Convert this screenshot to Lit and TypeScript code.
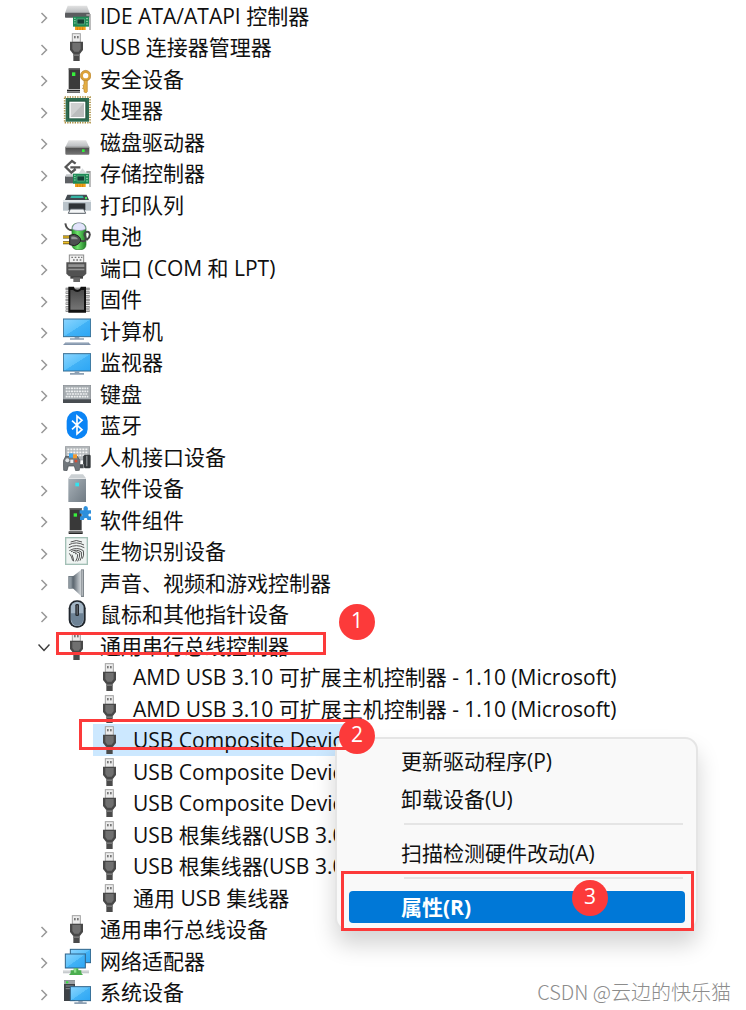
import { LitElement, html, svg, css, nothing } from "lit";
import { customElement, property, state } from "lit/decorators.js";
import { classMap } from "lit/directives/class-map.js";

const usb = svg`
  <rect x="28" y="2" width="24" height="26" fill="#ececec" stroke="#a2a2a2" stroke-width="3"/>
  <rect x="33" y="9" width="5" height="7" fill="#777"/><rect x="42" y="9" width="5" height="7" fill="#777"/>
  <path d="M31 56h19v28H31z" fill="#4a4a4a"/>
  <path d="M21 26h39v25l-9 11H30l-9-11z" fill="#484848"/>
  <path d="M28 30h25v18l-6 8H34l-6-8z" fill="#707070"/>
  <path d="M31 64h19v5H31z" fill="#777"/>`;

const card = svg`
  <path d="M70 36h13v48h-4V42h-9z" fill="#9b9b9b"/>
  <rect x="36" y="72" width="32" height="12" fill="#f2a21b"/>
  <path d="M43 76v8M51 76v8M59 76v8" stroke="#c06c0a" stroke-width="2"/>
  <rect x="30" y="44" width="48" height="30" fill="#1e8a57"/>
  <rect x="42" y="51" width="22" height="15" fill="#123f35" stroke="#69b98e" stroke-width="2"/>
  <path d="M33 49h5M33 56h5M33 63h5M69 50h6M69 58h6M69 66h6" stroke="#8bd1a6" stroke-width="3"/>`;

const gradients = svg`
  <defs>
    <linearGradient id="screen" x1="0" y1="0" x2="1" y2="1">
      <stop offset="0" stop-color="#8ad4ff"/><stop offset=".5" stop-color="#5cc2fb"/>
      <stop offset=".51" stop-color="#42b2f6"/><stop offset="1" stop-color="#2ca6f5"/>
    </linearGradient>
    <linearGradient id="silver" x1="0" y1="0" x2="0" y2="1">
      <stop offset="0" stop-color="#e3e3e3"/><stop offset="1" stop-color="#b5b8bb"/>
    </linearGradient>
    <linearGradient id="steel" x1="0" y1="0" x2="1" y2="1">
      <stop offset="0" stop-color="#a9b2b9"/><stop offset="1" stop-color="#6f7a83"/>
    </linearGradient>
    <linearGradient id="dark" x1="0" y1="0" x2="0" y2="1">
      <stop offset="0" stop-color="#4a4a4a"/><stop offset="1" stop-color="#757575"/>
    </linearGradient>
    <linearGradient id="horn" x1="0" y1="0" x2="1" y2="0">
      <stop offset="0" stop-color="#5c666f"/><stop offset=".6" stop-color="#a9b0b6"/><stop offset="1" stop-color="#d4d8db"/>
    </linearGradient>
    <linearGradient id="cell" x1="0" y1="0" x2="1" y2="0">
      <stop offset="0" stop-color="#2c9e2e"/><stop offset=".4" stop-color="#6fe36c"/><stop offset="1" stop-color="#1f7d25"/>
    </linearGradient>
  </defs>`;

const icons = {
  ide: svg`
    <path d="M14 11h58l8 22H6z" fill="url(#silver)"/>
    <rect x="6" y="32" width="74" height="15" rx="2" fill="#5a5c5f"/>${card}`,
  usb,
  security: svg`
    <rect x="17" y="10" width="34" height="62" fill="#3b3b3b"/>
    <path d="M17 10h34v4H17z" fill="#666"/>
    <rect x="27" y="22" width="10" height="11" fill="#37f03c"/>
    <path d="M12 74h39v9H12z" fill="#242424"/><path d="M12 78h39v3H12z" fill="#8b8b8b"/>
    <circle cx="68" cy="32" r="12" fill="none" stroke="#dca23a" stroke-width="8"/>
    <circle cx="68" cy="32" r="16" fill="none" stroke="#a77320" stroke-width="1.5"/>
    <path d="M63 46h10v34l-5 5-5-5v-7l-5-3 5-4-4-4 4-4z" fill="#e4ae45" stroke="#a77320" stroke-width="1.5"/>`,
  cpu: svg`
    <rect x="5" y="3" width="76" height="77" fill="none" stroke="#a98b3b" stroke-width="5" stroke-dasharray="4 3.5"/>
    <rect x="8" y="6" width="70" height="71" fill="#2d6b50"/>
    <rect x="16" y="14" width="54" height="54" fill="#1d5039"/>
    <rect x="21" y="19" width="44" height="46" fill="#cfd0d0" stroke="#fff" stroke-width="4"/>
    <path d="M23 63L63 21v42z" fill="#bbbdbd"/>`,
  disk: svg`
    <path d="M17 37h52l10 21H7z" fill="url(#silver)"/>
    <rect x="7" y="57" width="72" height="23" rx="3" fill="url(#dark)"/>
    <rect x="7" y="56" width="72" height="4" fill="#8e8e8e"/>
    <rect x="57" y="64" width="8" height="8" fill="#32ef3c"/>`,
  storage: svg`
    <path d="M6 51h32v22H6z" fill="#5d6064"/><path d="M10 46h30v7H6z" fill="#c5c8cb"/>
    <path d="M38 14L27 6 8 24l17 17 13-11M22 25h30" fill="none" stroke="#565656" stroke-width="7"/>
    <path d="M48 42l10-14 12 14z" fill="#d8dbdd"/>${card}`,
  printer: svg`
    <path d="M13 11h58l7 16H6z" fill="#434a50"/>
    <path d="M25 14h34l3 7H22z" fill="#35b5a5"/><path d="M66 18h6v7h-6z" fill="#49e35a"/>
    <path d="M0 27h84v32H0z" fill="#b9c3ca"/><path d="M0 27h84v6H0z" fill="#e5eaed"/>
    <path d="M17 37h50v20H17z" fill="#2f3438"/>
    <path d="M22 54h40l6 13H16z" fill="#f4f6f7" stroke="#596168" stroke-width="3"/>`,
  battery: svg`
    <path d="M7 4c2 14 11 21 20 21" fill="none" stroke="#4d4d4d" stroke-width="6"/>
    <rect x="27" y="4" width="42" height="79" rx="15" fill="url(#cell)" stroke="#27762b" stroke-width="2"/>
    <path d="M28 21c1-25 39-25 40 0-8 6-32 6-40 0z" fill="#e2e4fa" stroke="#8587a8" stroke-width="2"/>
    <path d="M53 56c18 7 17-9 12-15-4-12 13-16 15-6 2 8-4 15-9 19" fill="none" stroke="#444" stroke-width="6"/>
    <path d="M0 45h22M0 62h22" stroke="#4b3b09" stroke-width="9"/><path d="M0 45h22M0 62h22" stroke="#f0c22a" stroke-width="5"/>
    <path d="M20 40l14-3q18 5 19 17-1 12-19 17l-14-3z" fill="#4c4f51" stroke="#222" stroke-width="3"/>
    <path d="M25 44q15-2 20 8H25z" fill="#96999a"/>`,
  port: svg`
    <rect x="19" y="3" width="43" height="26" fill="#f1f1f1" stroke="#8b8b8b" stroke-width="3"/>
    <path d="M25 10h5M35 10h5M45 10h5M54 10h4M30 18h5M40 18h5M50 18h5" stroke="#777" stroke-width="4"/>
    <path d="M10 25h60v34l-8 8H18l-8-8z" fill="#525252"/>
    <path d="M16 31h48v8H16zM16 44h48v5H16z" fill="#929292"/>
    <path d="M22 66h38v8H22z" fill="#444"/><path d="M31 70h20v14H31z" fill="#686868"/>`,
  firmware: svg`
    <path d="M8 12h72M8 23h72M8 34h72M8 45h72M8 56h72M8 67h72M8 77h72" stroke="#555" stroke-width="7"/>
    <path d="M8 12h72M8 23h72M8 34h72M8 45h72M8 56h72M8 67h72M8 77h72" stroke="#ddd" stroke-width="3"/>
    <path d="M16 5h17q1 9 10 9t10-9h16v78H16z" fill="#111"/><path d="M22 15h8q13 12 25 0h8v59H22z" fill="url(#dark)"/>`,
  computer: svg`
    <rect x="1" y="6" width="82" height="53" fill="url(#screen)" stroke="#376d92" stroke-width="3"/>
    <path d="M35 60h14v4h14v4H21v-4h14z" fill="#8da0b3"/>
    <path d="M8 76h68l8 8H0z" fill="#8294ab"/><path d="M8 76h68v3H6z" fill="#c8d1dc"/>`,
  monitor: svg`
    <rect x="1" y="17" width="82" height="52" fill="url(#screen)" stroke="#376d92" stroke-width="3"/>
    <path d="M35 70h14v5h14v5H21v-5h14z" fill="#8da0b3"/>`,
  keyboard: svg`
    <rect x="1" y="16" width="82" height="44" fill="#a5abaf" stroke="#858b90" stroke-width="2"/>
    <path d="M8 25h68M8 34h68M8 50h68" stroke="#eef0f1" stroke-width="5" stroke-dasharray="6 2"/>
    <path d="M11 42h64" stroke="#eef0f1" stroke-width="5" stroke-dasharray="6 2"/>
    <path d="M0 58h84v11H0z" fill="#484d51"/>`,
  bluetooth: svg`
    <rect x="11" y="0" width="63" height="84" rx="30" fill="#0a84f5"/>
    <path d="M27 29l30 27-15 13V15l15 13-30 27" fill="none" stroke="#fff" stroke-width="5"/>`,
  hid: svg`
    <rect x="7" y="11" width="73" height="40" fill="#b2b7ba" stroke="#8c9195" stroke-width="2"/>
    <path d="M13 19h62M13 28h62M13 37h62" stroke="#f7f7f7" stroke-width="5" stroke-dasharray="6 3"/>
    <path d="M2 82L1 53l7-13h35l8 13-2 29-11 1-4-14H16l-4 14z" fill="#70767b" stroke="#464c50" stroke-width="2"/>
    <circle cx="13" cy="52" r="6" fill="#dfe2e4"/>
    <path d="M18 31h13v13H18z" fill="#3fa7ef"/><path d="M30 34h12v12H30z" fill="#f09a32"/>
    <path d="M22 50h9v10h-9z" fill="#eee"/><rect x="35" y="50" width="8" height="8" fill="#d84f36"/>
    <path d="M51 64h9V38h8v25h-6v13H51z" fill="#4a4e51"/>
    <rect x="63" y="35" width="20" height="41" rx="4" fill="#363a3d"/><path d="M70 38h3v32h-3z" fill="#a6abae"/>`,
  software: svg`
    <path d="M25 1h35l9 12H16z" fill="#cbd0d3"/><rect x="16" y="12" width="53" height="72" fill="url(#steel)"/>
    <path d="M16 12h53v3H16z" fill="#e1e4e6"/><rect x="37" y="26" width="11" height="11" fill="#32e4ef"/>`,
  component: svg`
    <rect x="20" y="6" width="36" height="67" fill="#393939"/><path d="M20 6h36v5H20z" fill="#6c6c6c"/>
    <rect x="32" y="22" width="10" height="10" fill="#37f03c"/>
    <path d="M17 76h42v8H17z" fill="#262626"/><path d="M17 79h42v2H17z" fill="#888"/>
    <path d="M50 13h12q-3-12 6-13 9 1 6 13h10v10q-8-2-8 4t8 4v11H73q1-6-5-6t-5 6H51V31q7 2 7-4t-8-4z" fill="#2d8fdc"/>`,
  biometric: svg`
    <rect x="8" y="2" width="65" height="80" fill="#eff4f2" stroke="#a3c0b6" stroke-width="4"/>
    <g fill="none" stroke="#555" stroke-width="3">
      <path d="M23 15q17-9 34 0M18 23q22-11 45 1M17 32q23-12 47 0"/>
      <path d="M19 41q22-13 42 0 3 15-3 24M24 44q16-9 31 1 3 16-4 26M30 47q11-6 20 1 1 14-6 25M36 50q6-1 8 3 0 10-6 20M19 49q8 10 10 22M27 53q4 10 5 20"/>
    </g>`,
  sound: svg`
    <path d="M16 21h17v38H16z" fill="#67727b"/><path d="M18 23h8v34h-8z" fill="#8e99a1"/>
    <path d="M31 21L55 2v80L31 59z" fill="url(#horn)"/><path d="M54 1h9v83h-9z" fill="#7f878d"/><path d="M56 4h3v76h-3z" fill="#ccd0d3"/>`,
  mouse: svg`
    <rect x="17" y="1" width="51" height="82" rx="24" fill="#20262d"/>
    <rect x="23" y="5" width="39" height="73" rx="19" fill="#a3b5c5"/>
    <path d="M24 40h37v18q-3 19-18 19T24 58z" fill="#6d8295"/>
    <rect x="37" y="12" width="11" height="36" rx="4" fill="#25292e"/><path d="M41 16h3v28h-3z" fill="#777e85"/>`,
  network: svg`
    <rect x="22" y="7" width="61" height="40" fill="url(#screen)" stroke="#2e6389" stroke-width="3"/>
    <rect x="7" y="21" width="60" height="42" fill="url(#screen)" stroke="#2e6389" stroke-width="3"/>
    <path d="M0 70h78v9H0z" fill="#c6cacd"/><path d="M0 70h78v3H0z" fill="#e7e9ea"/>
    <path d="M32 64h14v6h9v8l5 6H18l5-6v-8h9z" fill="#4cae50"/><path d="M33 65h7v12h-7z" fill="#8de08b"/>`,
  system: svg`
    <rect x="3" y="7" width="33" height="62" fill="#3e4246"/><path d="M3 7h33v11H3z" fill="#9da2a6"/>
    <rect x="9" y="10" width="7" height="6" fill="#36e23d"/><path d="M8 24h24M8 32h24" stroke="#8a8f93" stroke-width="3"/>
    <rect x="22" y="26" width="61" height="42" fill="url(#screen)" stroke="#2e6389" stroke-width="3"/>
    <path d="M46 69h13v4h12v5H34v-5h12z" fill="#8da0b3"/>`,
};

type IconName = keyof typeof icons;
interface Device { label: string; icon: IconName; children?: string[]; }

const devices: Device[] = [
  { label: "IDE ATA/ATAPI 控制器", icon: "ide" },
  { label: "USB 连接器管理器", icon: "usb" },
  { label: "安全设备", icon: "security" },
  { label: "处理器", icon: "cpu" },
  { label: "磁盘驱动器", icon: "disk" },
  { label: "存储控制器", icon: "storage" },
  { label: "打印队列", icon: "printer" },
  { label: "电池", icon: "battery" },
  { label: "端口 (COM 和 LPT)", icon: "port" },
  { label: "固件", icon: "firmware" },
  { label: "计算机", icon: "computer" },
  { label: "监视器", icon: "monitor" },
  { label: "键盘", icon: "keyboard" },
  { label: "蓝牙", icon: "bluetooth" },
  { label: "人机接口设备", icon: "hid" },
  { label: "软件设备", icon: "software" },
  { label: "软件组件", icon: "component" },
  { label: "生物识别设备", icon: "biometric" },
  { label: "声音、视频和游戏控制器", icon: "sound" },
  { label: "鼠标和其他指针设备", icon: "mouse" },
  {
    label: "通用串行总线控制器", icon: "usb",
    children: [
      "AMD USB 3.10 可扩展主机控制器 - 1.10 (Microsoft)",
      "AMD USB 3.10 可扩展主机控制器 - 1.10 (Microsoft)",
      "USB Composite Device",
      "USB Composite Device",
      "USB Composite Device",
      "USB 根集线器(USB 3.0)",
      "USB 根集线器(USB 3.0)",
      "通用 USB 集线器",
    ],
  },
  { label: "通用串行总线设备", icon: "usb" },
  { label: "网络适配器", icon: "network" },
  { label: "系统设备", icon: "system" },
];

@customElement("device-row")
class DeviceRow extends LitElement {
  @property() label = "";
  @property() icon: IconName = "usb";
  @property({ type: Boolean }) child = false;
  @property({ type: Boolean }) open = false;
  @property({ type: Boolean }) selected = false;

  static styles = css`
    :host { display: flex; align-items: stretch; padding-left: 38px; white-space: nowrap; }
    .toggle { width: 12px; margin-right: 10px; padding: 5px 0 0; border: 0; background: none; color: #989898; }
    .toggle.open { color: #3c3c3c; }
    .arrow { display: block; width: 12px; height: 12px; margin: 0 auto; }
    .node { display: flex; align-items: center; padding: 0 3px; gap: 9px; }
    .node.child { margin-left: 55px; }
    .node.selected { background: #cce8ff; }
    .icon { flex: none; width: 28px; height: 28px; }
    .text { line-height: 30px; }
  `;

  private toggle() {
    this.dispatchEvent(new CustomEvent("toggle-node", { bubbles: true, composed: true }));
  }

  render() {
    return html`
      ${this.child ? nothing : html`
        <button class=${classMap({ toggle: true, open: this.open })} aria-label=${this.label}
          aria-expanded=${this.open ? "true" : "false"} @click=${this.toggle}>
          <svg class="arrow" viewBox="0 0 12 12" fill="none" stroke="currentColor" stroke-width="1.5">
            ${this.open ? svg`<path d="M.5 2.5l5.5 6 5.5-6"/>` : svg`<path d="M3.5 1l5 5-5 5"/>`}
          </svg>
        </button>`}
      <div class=${classMap({ node: true, child: this.child, selected: this.selected })}>
        <svg class="icon" viewBox="0 0 84 84" aria-hidden="true">${gradients}${icons[this.icon]}</svg>
        <span class="text">${this.label}</span>
      </div>`;
  }
}

@customElement("context-menu")
class ContextMenu extends LitElement {
  static styles = css`
    :host {
      display: flex; flex-direction: column; box-sizing: border-box;
      padding: 3px 11px 3px 12px; border: 2px solid #e5e5e5; border-radius: 13px;
      background: #f9f9f9; box-shadow: 0 14px 22px rgba(0, 0, 0, 0.17);
    }
    .item {
      height: 32px; margin: 3px 0; padding: 0 52px; border: 0; border-radius: 4px;
      background: none; color: inherit; font: inherit; line-height: 32px; text-align: left;
    }
    .item.active { background: #0078d7; color: #fff; font-weight: 700; }
    .line { width: calc(100% - 57px); height: 2px; margin: 5px 2px 9px auto; border: 0; background: #e5e5e5; }
  `;

  render() {
    return html`
      <button class="item" role="menuitem">更新驱动程序(P)</button>
      <button class="item" role="menuitem">卸载设备(U)</button>
      <hr class="line">
      <button class="item" role="menuitem">扫描检测硬件改动(A)</button>
      <hr class="line">
      <button class="item active" role="menuitem">属性(R)</button>`;
  }
}

@customElement("app-root")
class AppRoot extends LitElement {
  @state() private expanded = true;

  static styles = css`
    :host {
      display: block; position: relative; min-height: 100vh; overflow: hidden;
      background: #fff; color: #101010;
      font-family: "Open Sans", "Noto Sans CJK SC", sans-serif; font-size: 21px;
    }
    .tree { display: flex; flex-direction: column; }
    .row { height: 31px; }
    .row:nth-child(even) { height: 32px; }
    .menu { position: absolute; left: 335px; top: 737px; width: 363px; }
    .frame { position: absolute; box-sizing: border-box; border: 3px solid #fc3a3a; pointer-events: none; }
    .frame.group { left: 56px; top: 632px; width: 270px; height: 23px; }
    .frame.device { left: 79px; top: 719px; width: 275px; height: 31px; }
    .frame.command { left: 341px; top: 871px; width: 353px; height: 60px; }
    .step {
      position: absolute; width: 36px; height: 36px; border-radius: 50%;
      background: #fc3a3a; color: #fff; text-align: center; line-height: 32px;
    }
    .step.one { left: 339px; top: 604px; }
    .step.two { left: 339px; top: 718px; }
    .step.three { left: 572px; top: 880px; }
    .credit {
      position: absolute; right: 15px; bottom: 4px; color: #8c8c8c;
      font-family: "Noto Sans CJK SC", sans-serif; font-size: 20px; line-height: 28px; font-weight: 300;
    }
  `;

  render() {
    return html`
      <main class="tree" @toggle-node=${this.onToggle}>
        ${devices.map((d) => {
          const open = !!d.children && this.expanded;
          return html`
            <device-row class="row" .label=${d.label} .icon=${d.icon} .open=${open}></device-row>
            ${open ? d.children!.map((name, i) => html`
              <device-row class="row" child .label=${name} .selected=${i === 2}></device-row>`) : nothing}`;
        })}
      </main>
      <context-menu class="menu" role="menu"></context-menu>
      <div class="frame group"></div>
      <div class="frame device"></div>
      <div class="frame command"></div>
      <span class="step one">1</span>
      <span class="step two">2</span>
      <span class="step three">3</span>
      <span class="credit">CSDN @云边的快乐猫</span>`;
  }

  private onToggle(e: Event) {
    if ((e.target as DeviceRow).label === "通用串行总线控制器") this.expanded = !this.expanded;
  }
}
